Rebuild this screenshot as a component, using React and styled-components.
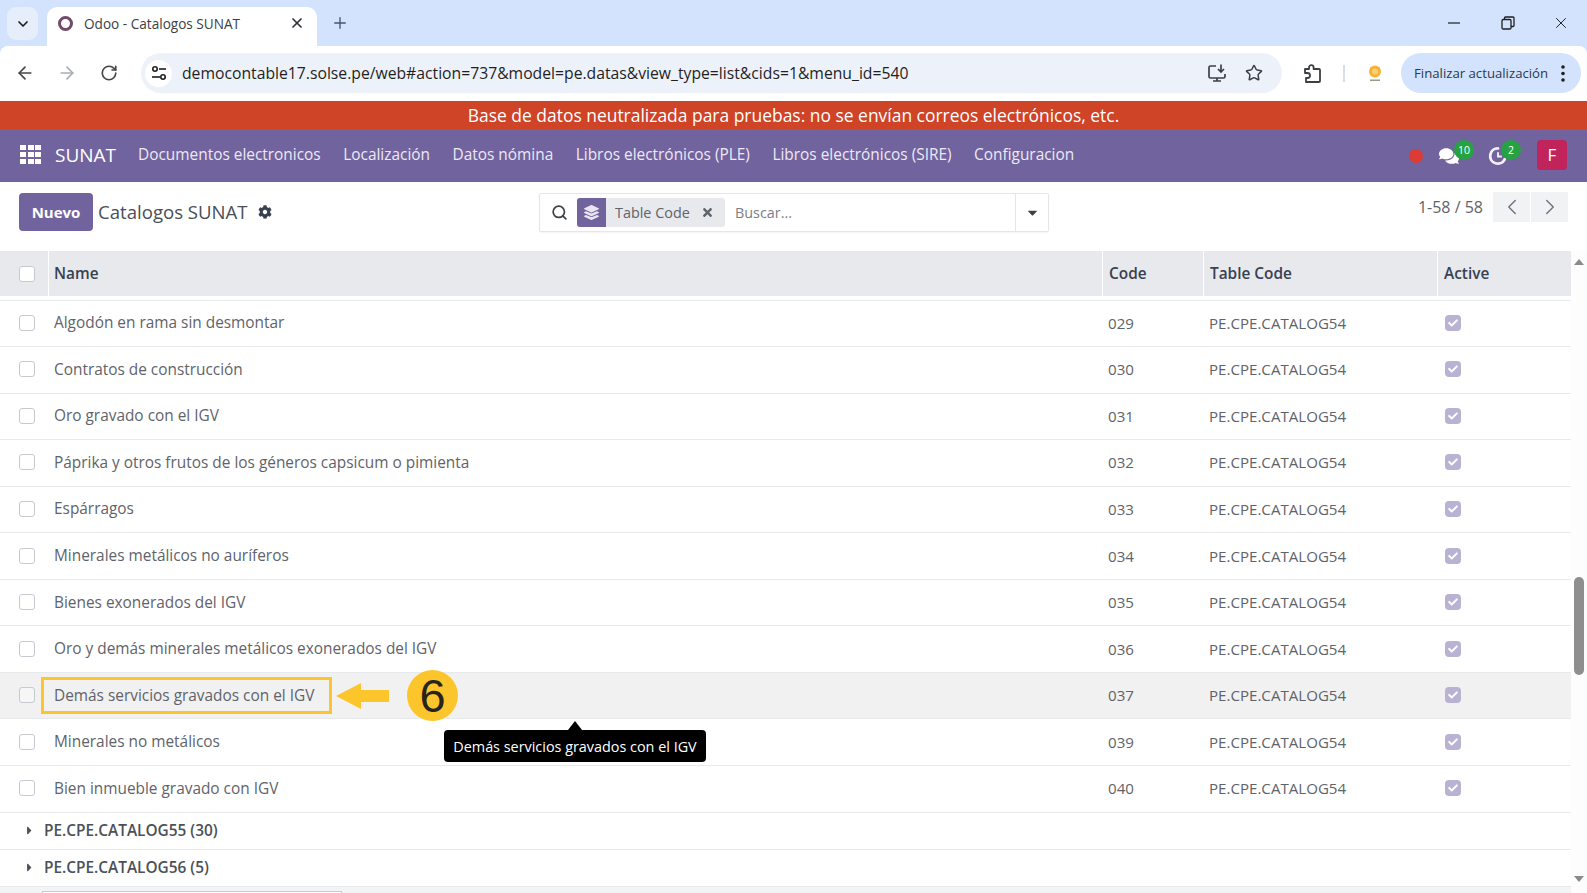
import React from "react";
import styled, { createGlobalStyle } from "styled-components";
import {
  FaCog, FaLayerGroup, FaTimes, FaCaretDown, FaCaretRight, FaComments, FaCheck,
} from "react-icons/fa";
import { ChevronDown, ChevronLeft, ChevronRight, X, Plus, ArrowLeft, ArrowRight, RotateCw, Star, Search } from "lucide-react";

const UI = `"Open Sans", "Noto Sans", sans-serif`;

const Global = createGlobalStyle`
  html, body { margin: 0; padding: 0; height: 100%; overflow: hidden; background: #fff; }
  * { box-sizing: border-box; }
  body { font-family: ${UI}; }
`;

const Page = styled.div`
  position: relative;
  width: 1587px;
  height: 893px;
  overflow: hidden;
  display: flex;
  flex-direction: column;
`;

/* ---------- browser chrome ---------- */
const TabStrip = styled.div`
  height: 46px;
  flex: none;
  background: #d3e3fd;
  display: flex;
  align-items: flex-end;
  padding-left: 7px;
`;
const TabListButton = styled.div`
  width: 31px;
  height: 33px;
  margin-bottom: 6px;
  border-radius: 9px;
  background: #e6eefb;
  display: flex;
  align-items: center;
  justify-content: center;
  color: #1f1f1f;
`;
const Tab = styled.div`
  width: 270px;
  height: 39px;
  margin-left: 9px;
  background: #fff;
  border-radius: 10px 10px 0 0;
  display: flex;
  align-items: center;
  padding: 0 12px 7px 11px;
  color: #3c4043;
  font-size: 13.6px;
`;
const Favicon = styled.span`
  width: 15px;
  height: 15px;
  border-radius: 50%;
  border: 3px solid #714b67;
  flex: none;
  margin-right: 11px;
`;
const TabTitle = styled.span`
  flex: 1;
  white-space: nowrap;
`;
const NewTab = styled.div`
  margin: 0 0 14px 14px;
  color: #47566c;
  display: flex;
`;
const WindowControls = styled.div`
  margin-left: auto;
  margin-right: -1px;
  display: flex;
  align-items: center;
  height: 46px;
  color: #1f1f1f;
`;
const WindowButton = styled.div`
  width: 53.5px;
  display: flex;
  justify-content: center;
`;
const Toolbar = styled.div`
  height: 54px;
  flex: none;
  background: #fff;
  display: flex;
  align-items: center;
  padding: 0 6px 0 4px;
  border-radius: 8px 8px 0 0;
`;
const ToolbarStrip = styled.div`
  background: #d3e3fd;
  flex: none;
`;
const NavButton = styled.div`
  width: 42px;
  flex: none;
  display: flex;
  justify-content: center;
  color: ${(p) => (p.$dim ? "#a9adb3" : "#474747")};
`;
const AddressBar = styled.div`
  width: 1141px;
  height: 40px;
  margin-left: 11px;
  background: #edf2fa;
  border-radius: 20px;
  display: flex;
  align-items: center;
  padding: 0 10px 0 4px;
  flex: none;
`;
const SiteInfo = styled.div`
  width: 27px;
  height: 27px;
  border-radius: 50%;
  background: #fff;
  display: flex;
  align-items: center;
  justify-content: center;
  margin-right: 10px;
  color: #1f1f1f;
  flex: none;
`;
const Url = styled.div`
  flex: 1;
  font-size: 15.72px;
  color: #1f1f1f;
  white-space: nowrap;
`;
const AddressIcon = styled.div`
  width: 37px;
  display: flex;
  justify-content: center;
  color: #3c4043;
`;
const ExtensionSlot = styled.div`
  width: 61px;
  display: flex;
  justify-content: center;
  color: #3c4043;
  flex: none;
`;
const ToolbarDivider = styled.div`
  width: 2px;
  height: 17px;
  background: #d5dff0;
  flex: none;
`;
const ProfileSlot = styled.div`
  width: 56px;
  padding-left: 4px;
  display: flex;
  justify-content: center;
  flex: none;
`;
const UpdatePill = styled.div`
  width: 180px;
  height: 40px;
  border-radius: 20px;
  background: #d3e3fd;
  display: flex;
  align-items: center;
  padding-left: 13px;
  font-size: 13.2px;
  color: #2a3a4f;
  white-space: nowrap;
  flex: none;
`;
const PillDots = styled.span`
  margin-left: auto;
  margin-right: 16px;
  display: flex;
  color: #1f1f1f;
`;

/* ---------- odoo ---------- */
const Banner = styled.div`
  height: 28px;
  margin-top: 1px;
  flex: none;
  background: #cf4327;
  color: #fff;
  font-size: 17.45px;
  display: flex;
  align-items: center;
  justify-content: center;
`;
const NavBar = styled.div`
  height: 53px;
  flex: none;
  background: #71639e;
  display: flex;
  align-items: center;
  color: #fff;
  padding: 0 0 2px 20px;
`;
const AppGrid = styled.div`
  width: 21px;
  height: 20px;
  display: grid;
  grid-template-columns: repeat(3, 1fr);
  grid-template-rows: repeat(3, 1fr);
  gap: 1.5px;
  margin-right: 14px;
  span { background: #fff; }
`;
const Brand = styled.div`
  font-size: 19px;
  margin-right: 23px;
  width: 60px;
  white-space: nowrap;
`;
const MenuItem = styled.div`
  font-size: 15.42px;
  color: #ece9f3;
  white-space: nowrap;
  margin-right: 22.5px;
`;
const Systray = styled.div`
  margin-left: auto;
  display: flex;
  align-items: center;
  height: 100%;
  padding-right: 20px;
`;
const RedDot = styled.span`
  width: 14px;
  height: 14px;
  border-radius: 50%;
  background: #dc3c35;
  margin-right: 16px;
  margin-top: 2px;
`;
const TrayIcon = styled.div`
  position: relative;
  width: ${(p) => p.$w}px;
  display: flex;
  align-items: center;
  justify-content: flex-start;
  margin-top: 2px;
  color: #fff;
`;
const Badge = styled.span`
  position: absolute;
  left: ${(p) => p.$left}px;
  top: -6px;
  min-width: 20px;
  height: 20px;
  border-radius: 10px;
  background: #27a243;
  color: #fff;
  font-size: 10.5px;
  display: flex;
  align-items: center;
  justify-content: center;
`;
const Avatar = styled.div`
  width: 30px;
  height: 30px;
  border-radius: 4px;
  background: #c0245b;
  color: #fff;
  font-size: 17px;
  display: flex;
  align-items: center;
  justify-content: center;
`;

const ControlPanel = styled.div`
  height: 69px;
  flex: none;
  display: grid;
  grid-template-columns: 539px 510px 1fr;
  background: #fff;
`;
const PanelLeft = styled.div`
  display: flex;
  align-items: flex-start;
  padding: 11px 0 0 19px;
`;
const NewButton = styled.div`
  width: 74px;
  height: 38px;
  background: #71639e;
  color: #fff;
  border-radius: 4px;
  font-weight: 700;
  font-size: 15px;
  display: flex;
  align-items: center;
  justify-content: center;
`;
const PanelTitle = styled.div`
  font-size: 18.6px;
  line-height: 38px;
  color: #495057;
  margin-left: 5px;
  white-space: nowrap;
`;
const Gear = styled.div`
  height: 38px;
  display: flex;
  align-items: center;
  margin-left: 10px;
  color: #374151;
`;
const SearchBox = styled.div`
  margin-top: 11px;
  height: 39px;
  border: 1px solid #e4e6ea;
  border-radius: 2px;
  display: flex;
  align-items: center;
  padding-left: 11px;
  box-shadow: 0 1px 2px rgba(0, 0, 0, 0.05);
`;
const SearchIcon = styled.div`
  color: #3c4248;
  display: flex;
  margin-right: 9px;
`;
const Facet = styled.div`
  width: 148px;
  height: 29px;
  background: #e7e9ed;
  border-radius: 3px;
  display: flex;
  align-items: center;
  color: #5f636a;
  font-size: 14.4px;
  flex: none;
`;
const FacetIcon = styled.div`
  width: 29px;
  height: 29px;
  background: #71639e;
  color: #e8e5f0;
  border-radius: 3px 0 0 3px;
  display: flex;
  align-items: center;
  justify-content: center;
  margin-right: 9px;
`;
const FacetRemove = styled.div`
  display: flex;
  margin-left: auto;
  margin-right: 11px;
  color: #5f636a;
`;
const SearchPlaceholder = styled.div`
  color: #7b8087;
  font-size: 14.4px;
  margin-left: 10px;
  flex: 1;
`;
const SearchCaret = styled.div`
  width: 33px;
  height: 100%;
  border-left: 1px solid #e4e6ea;
  display: flex;
  align-items: center;
  justify-content: center;
  color: #3c4248;
  flex: none;
`;
const Pager = styled.div`
  display: flex;
  align-items: flex-start;
  justify-content: flex-end;
  padding: 10px 19px 0 0;
`;
const PagerText = styled.div`
  font-size: 16px;
  line-height: 31px;
  color: #5f636a;
  margin-right: 9px;
`;
const PagerButton = styled.div`
  width: 37px;
  height: 30px;
  margin-left: 1px;
  background: #f1f2f3;
  display: flex;
  align-items: center;
  justify-content: center;
  color: #6b7280;
`;

const TableArea = styled.div`
  flex: 1;
  display: flex;
  min-height: 0;
`;
const Table = styled.div`
  width: 1571px;
  flex: none;
`;
const columns = "49px 1054px 101px 234px 133px";
const HeadRow = styled.div`
  display: grid;
  grid-template-columns: ${columns};
  height: 45px;
  margin-bottom: 3.5px;
`;
const HeadCell = styled.div`
  background: #e7e9ed;
  display: flex;
  align-items: center;
  padding-left: ${(p) => p.$pad}px;
  margin-right: ${(p) => (p.$last ? 0 : 1.5)}px;
  font-weight: 600;
  font-size: 15.4px;
  color: #374151;
`;
const Rows = styled.div`
  border-top: 1px solid #e7e9ed;
`;
const Row = styled.div`
  display: grid;
  grid-template-columns: ${columns};
  height: 46.55px;
  align-items: center;
  border-bottom: 1px solid #e7e9ed;
  background: ${(p) => (p.$hover ? "#f1f1f1" : "#fff")};
  color: #5f636a;
`;
const Cell = styled.div`
  padding: 0 0 1px ${(p) => (p.$box ? 18.5 : 5)}px;
  font-size: ${(p) => (p.$name ? 15.4 : 15.1)}px;
  display: flex;
  align-items: center;
  white-space: nowrap;
`;
const Check = styled.span`
  width: 16px;
  height: 16px;
  border: 1px solid #c6cad0;
  border-radius: 3px;
  background: ${(p) => (p.$dim ? "#f6f6f6" : "#fff")};
  display: block;
`;
const Checked = styled.span`
  width: 16px;
  height: 16px;
  margin-left: 1.5px;
  border-radius: 4px;
  background: #b9b2d2;
  color: #fff;
  display: flex;
  align-items: center;
  justify-content: center;
`;
const GroupRow = styled.div`
  height: 37px;
  display: flex;
  align-items: center;
  padding-left: 23px;
  border-bottom: 1px solid #e7e9ed;
  font-size: 15.4px;
  font-weight: 600;
  color: #4b5158;
`;
const GroupCaret = styled.span`
  display: flex;
  width: 21px;
  color: #4b5158;
`;
const TableFoot = styled.div`
  position: absolute;
  left: 0;
  right: 16px;
  top: 887px;
  height: 6px;
  background: #f3f4f5;
`;
const FootThumb = styled.div`
  margin-left: 42px;
  width: 300px;
  height: 6px;
  margin-top: 4px;
  background: #fff;
  border: 1px solid #c9ccd1;
`;
const Scrollbar = styled.div`
  width: 16px;
  flex: none;
  background: #fdfdfd;
  position: relative;
`;
const ScrollThumb = styled.div`
  position: absolute;
  left: 3px;
  top: 326px;
  width: 10px;
  height: 98px;
  border-radius: 5px;
  background: #8e8e8e;
`;
const ScrollArrow = styled.span`
  position: absolute;
  left: 3px;
  top: ${(p) => p.$top}px;
  width: 0;
  height: 0;
  border-left: 5px solid transparent;
  border-right: 5px solid transparent;
  ${(p) =>
    p.$up ? "border-bottom: 6px solid #8a8a8a;" : "border-top: 6px solid #8a8a8a;"}
`;

/* ---------- overlays ---------- */
const Callout = styled.div`
  position: absolute;
  left: 41px;
  top: 677px;
  width: 291px;
  height: 37px;
  border: 3px solid #fdc52c;
`;
const CalloutArrow = styled.svg`
  position: absolute;
  left: 336px;
  top: 683px;
`;
const StepCircle = styled.div`
  position: absolute;
  left: 407px;
  top: 670px;
  width: 51px;
  height: 51px;
  border-radius: 50%;
  background: #fdc52c;
  color: #26241c;
  font-family: "Liberation Sans", sans-serif;
  font-size: 47px;
  line-height: 51px;
  text-align: center;
`;
const Tooltip = styled.div`
  position: absolute;
  left: 444px;
  top: 730px;
  width: 262px;
  height: 32px;
  background: #000;
  color: #fff;
  border-radius: 4px;
  font-size: 14.4px;
  display: flex;
  align-items: center;
  justify-content: center;
  white-space: nowrap;
  &::before {
    content: "";
    position: absolute;
    left: 124px;
    top: -9px;
    border-left: 7px solid transparent;
    border-right: 7px solid transparent;
    border-bottom: 9px solid #000;
  }
`;

const rows = [
  ["Algodón en rama sin desmontar", "029"],
  ["Contratos de construcción", "030"],
  ["Oro gravado con el IGV", "031"],
  ["Páprika y otros frutos de los géneros capsicum o pimienta", "032"],
  ["Espárragos", "033"],
  ["Minerales metálicos no auríferos", "034"],
  ["Bienes exonerados del IGV", "035"],
  ["Oro y demás minerales metálicos exonerados del IGV", "036"],
  ["Demás servicios gravados con el IGV", "037"],
  ["Minerales no metálicos", "039"],
  ["Bien inmueble gravado con IGV", "040"],
];
const menu = [
  "Documentos electronicos",
  "Localización",
  "Datos nómina",
  "Libros electrónicos (PLE)",
  "Libros electrónicos (SIRE)",
  "Configuracion",
];

const TuneIcon = () => (
  <svg width="18" height="18" viewBox="0 0 18 18" fill="none" stroke="currentColor" strokeWidth="1.6">
    <circle cx="5" cy="5" r="2.2" />
    <path d="M9 5h7" />
    <circle cx="13" cy="13" r="2.2" />
    <path d="M2 13h8" />
  </svg>
);
const InstallIcon = () => (
  <svg width="20" height="20" viewBox="0 0 20 20" fill="none" stroke="currentColor" strokeWidth="1.7">
    <path d="M9 3H3.5A1.5 1.5 0 0 0 2 4.5v9A1.5 1.5 0 0 0 3.5 15h13a1.5 1.5 0 0 0 1.5-1.5V11" />
    <path d="M6 18h8M10 15v3" />
    <path d="M14 1.5v7M11 6l3 3 3-3" />
  </svg>
);
const PuzzleIcon = () => (
  <svg width="20" height="21" viewBox="0 0 20 21" fill="none" stroke="currentColor" strokeWidth="1.8" strokeLinejoin="round">
    <path d="M2 6h4V4.5a2.3 2.3 0 0 1 4.6 0V6H16a1 1 0 0 1 1 1v11a1 1 0 0 1-1 1H3v-4h1.5a2.5 2.5 0 0 0 0-5H2z" />
  </svg>
);
const SunBadge = () => (
  <svg width="14" height="17" viewBox="0 0 14 17">
    <circle cx="7" cy="6.5" r="6" fill="#f5b335" />
    <circle cx="7" cy="6.5" r="3" fill="#f9cf7a" />
    <rect x="2" y="14.5" width="10" height="1.5" fill="#9a9a8a" />
  </svg>
);
const ActivityIcon = () => (
  <svg width="20" height="20" viewBox="0 0 21 21" fill="none">
    <path d="M17.5 14a8 8 0 1 1-7-11.5" stroke="#f2f0f7" strokeWidth="3" strokeLinecap="round" />
    <path d="M10.5 6.5v4.5h4" stroke="#f2f0f7" strokeWidth="2" />
  </svg>
);
const Dots = () => (
  <svg width="4" height="17" viewBox="0 0 4 17" fill="currentColor">
    <circle cx="2" cy="2" r="1.8" />
    <circle cx="2" cy="8.5" r="1.8" />
    <circle cx="2" cy="15" r="1.8" />
  </svg>
);
const MinIcon = () => (
  <svg width="14" height="14" viewBox="0 0 14 14" stroke="currentColor" strokeWidth="1.2">
    <path d="M1 7h12" />
  </svg>
);
const RestoreIcon = () => (
  <svg width="14" height="14" viewBox="0 0 14 14" fill="none" stroke="currentColor" strokeWidth="1.3">
    <rect x="1" y="3.5" width="9" height="9.5" rx="1.2" />
    <path d="M3.5 3.5V2a1 1 0 0 1 1-1H12a1 1 0 0 1 1 1v7.5a1 1 0 0 1-1 1h-2" />
  </svg>
);

export default function App() {
  return (
    <Page>
      <Global />
      <TabStrip>
        <TabListButton><ChevronDown size={16} strokeWidth={2.6} /></TabListButton>
        <Tab>
          <Favicon />
          <TabTitle>Odoo - Catalogos SUNAT</TabTitle>
          <X size={16} strokeWidth={2.6} color="#303338" />
        </Tab>
        <NewTab><Plus size={18} strokeWidth={1.8} /></NewTab>
        <WindowControls>
          <WindowButton><MinIcon /></WindowButton>
          <WindowButton><RestoreIcon /></WindowButton>
          <WindowButton><X size={18} strokeWidth={1.3} /></WindowButton>
        </WindowControls>
      </TabStrip>
      <ToolbarStrip>
        <Toolbar>
          <NavButton><ArrowLeft size={20} strokeWidth={2} /></NavButton>
          <NavButton $dim><ArrowRight size={20} strokeWidth={2} /></NavButton>
          <NavButton><RotateCw size={18} strokeWidth={2.2} /></NavButton>
          <AddressBar>
            <SiteInfo><TuneIcon /></SiteInfo>
            <Url>democontable17.solse.pe/web#action=737&amp;model=pe.datas&amp;view_type=list&amp;cids=1&amp;menu_id=540</Url>
            <AddressIcon><InstallIcon /></AddressIcon>
            <AddressIcon><Star size={18} strokeWidth={2} /></AddressIcon>
          </AddressBar>
          <ExtensionSlot><PuzzleIcon /></ExtensionSlot>
          <ToolbarDivider />
          <ProfileSlot><SunBadge /></ProfileSlot>
          <UpdatePill>
            Finalizar actualización
            <PillDots><Dots /></PillDots>
          </UpdatePill>
        </Toolbar>
      </ToolbarStrip>

      <Banner>Base de datos neutralizada para pruebas: no se envían correos electrónicos, etc.</Banner>
      <NavBar>
        <AppGrid>{Array.from({ length: 9 }, (_, i) => <span key={i} />)}</AppGrid>
        <Brand>SUNAT</Brand>
        {menu.map((m) => <MenuItem key={m}>{m}</MenuItem>)}
        <Systray>
          <RedDot />
          <TrayIcon $w={49}>
            <FaComments size={20} />
            <Badge $left={15}>10</Badge>
          </TrayIcon>
          <TrayIcon $w={49}>
            <ActivityIcon />
            <Badge $left={13}>2</Badge>
          </TrayIcon>
          <Avatar>F</Avatar>
        </Systray>
      </NavBar>

      <ControlPanel>
        <PanelLeft>
          <NewButton>Nuevo</NewButton>
          <PanelTitle>Catalogos SUNAT</PanelTitle>
          <Gear><FaCog size={14} /></Gear>
        </PanelLeft>
        <SearchBox>
          <SearchIcon><Search size={17} strokeWidth={2.4} /></SearchIcon>
          <Facet>
            <FacetIcon><FaLayerGroup size={15} /></FacetIcon>
            Table Code
            <FacetRemove><FaTimes size={13} /></FacetRemove>
          </Facet>
          <SearchPlaceholder>Buscar...</SearchPlaceholder>
          <SearchCaret><FaCaretDown size={15} /></SearchCaret>
        </SearchBox>
        <Pager>
          <PagerText>1-58 / 58</PagerText>
          <PagerButton><ChevronLeft size={26} strokeWidth={1.3} /></PagerButton>
          <PagerButton><ChevronRight size={26} strokeWidth={1.3} /></PagerButton>
        </Pager>
      </ControlPanel>

      <TableArea>
        <Table>
          <HeadRow>
            <HeadCell $pad={19}><Check /></HeadCell>
            <HeadCell $pad={5}>Name</HeadCell>
            <HeadCell $pad={6}>Code</HeadCell>
            <HeadCell $pad={6}>Table Code</HeadCell>
            <HeadCell $pad={6} $last>Active</HeadCell>
          </HeadRow>
          <Rows>
            {rows.map(([name, code]) => {
              const hover = code === "037";
              return (
                <Row key={code} $hover={hover}>
                  <Cell $box><Check $dim={hover} /></Cell>
                  <Cell $name>{name}</Cell>
                  <Cell>{code}</Cell>
                  <Cell>PE.CPE.CATALOG54</Cell>
                  <Cell>
                    <Checked><FaCheck size={10} /></Checked>
                  </Cell>
                </Row>
              );
            })}
          </Rows>
          <GroupRow><GroupCaret><FaCaretRight size={13} /></GroupCaret>PE.CPE.CATALOG55 (30)</GroupRow>
          <GroupRow><GroupCaret><FaCaretRight size={13} /></GroupCaret>PE.CPE.CATALOG56 (5)</GroupRow>
        </Table>
        <Scrollbar>
          <ScrollArrow $up $top={8} />
          <ScrollThumb />
          <ScrollArrow $top={625} />
        </Scrollbar>
      </TableArea>
      <TableFoot><FootThumb /></TableFoot>

      <Callout />
      <CalloutArrow width="53" height="26" viewBox="0 0 53 26">
        <polygon points="0,13 25,0 25,7 53,7 53,19 25,19 25,26" fill="#fdc52c" />
      </CalloutArrow>
      <StepCircle>6</StepCircle>
      <Tooltip>Demás servicios gravados con el IGV</Tooltip>
    </Page>
  );
}
